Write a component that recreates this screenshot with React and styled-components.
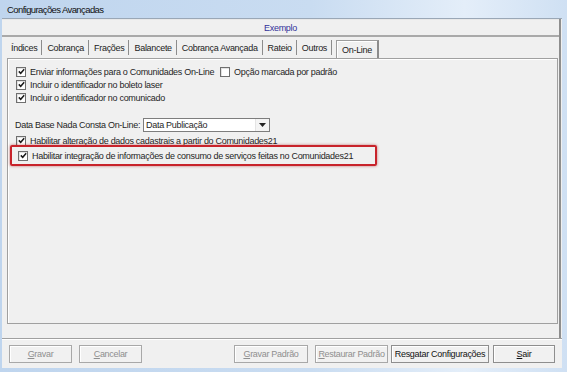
import React from 'react';
import styled, { createGlobalStyle } from 'styled-components';

const GlobalStyle = createGlobalStyle`
  html, body {
    margin: 0;
    padding: 0;
    background: #f0f0f0;
  }
  body {
    font-family: "Liberation Sans", Arial, sans-serif;
    font-size: 9px;
    letter-spacing: -0.3px;
    color: #1e1e1e;
  }
`;

const Frame = styled.div`
  width: 567px;
  height: 372px;
  box-sizing: border-box;
  display: flex;
  flex-direction: column;
  background: linear-gradient(90deg, #bfd5ee 0%, #c9dcf1 55%, #e4eef9 82%, #cfe0f3 100%);
  padding: 0 5px 4px 2px;
  overflow: hidden;
`;

const TitleBar = styled.div`
  height: 18px;
  display: flex;
  align-items: center;
  padding-left: 5px;
  font-size: 9.5px;
  letter-spacing: -0.6px;
  color: #111;
`;

const Client = styled.div`
  flex: 1;
  display: flex;
  flex-direction: column;
  background: #f0f0f0;
  border-top: 1px solid #9aa7b6;
`;

const Group = styled.div`
  flex: 1;
  display: flex;
  flex-direction: column;
  border-right: 2px solid #8e8e8e;
  margin-right: 1px;
`;

const Header = styled.div`
  height: 15px;
  display: flex;
  align-items: center;
  justify-content: center;
  border-top: 1px solid #e8e8e8;
  border-bottom: 2px solid #a9a9a9;
  color: #33339a;
`;

const TabRow = styled.div`
  display: flex;
  align-items: flex-end;
  height: 21px;
  padding-left: 5px;
`;

const Tab = styled.div`
  height: 15px;
  display: flex;
  align-items: center;
  padding: 0 4px 0 4px;
  margin-right: 0;
  color: #222;
  border-right: 1px solid #8c8c8c;
  margin-bottom: 3px;
  & + & {
    padding-left: 5px;
  }
`;

const ActiveTab = styled(Tab)`
  height: 17px;
  margin-bottom: 0;
  margin-left: 4px;
  border: 1px solid #9d9d9d;
  border-bottom: none;
  border-right: 2px solid #8c8c8c;
  padding: 0 5px;
  box-shadow: inset 1px 1px 0 #fff;
`;

const Panel = styled.div`
  margin: 0 1px 0 5px;
  height: 258px;
  border: 1px solid #a0a0a0;
  box-shadow: inset 1px 1px 0 #fff;
  padding: 6px 0 0 8px;
  display: flex;
  flex-direction: column;
  gap: 2px;
  color: #1f1f1f;
`;

const Row = styled.div`
  display: flex;
  align-items: center;
  height: 11px;
  margin-top: ${p => p.$top || 0}px;
`;

const CheckItem = styled.label`
  display: flex;
  align-items: center;
  gap: 4px;
  margin-right: 6px;
  white-space: nowrap;
`;

const Box = styled.span`
  width: 10px;
  height: 10px;
  box-sizing: border-box;
  border: 1px solid #6f6f6f;
  background: #fff;
  display: flex;
  align-items: center;
  justify-content: center;
  box-shadow: inset 1px 1px 0 #e2e2e2;
`;

const Highlight = styled.div`
  align-self: flex-start;
  margin: -3px 0 0 -6px;
  padding: 3px 16px 3px 6px;
  border: 2px solid #c8232b;
  border-radius: 2px;
  box-shadow: 0 0 3px rgba(160, 0, 0, 0.55);
`;

const FieldRow = styled.div`
  display: flex;
  align-items: center;
  height: 15px;
  margin-top: ${p => p.$top || 0}px;
  margin-left: -1px;
  gap: 3px;
  white-space: nowrap;
`;

const Select = styled.div`
  width: 127px;
  height: 14px;
  box-sizing: border-box;
  border: 1px solid #7d7d7d;
  background: #fff;
  display: flex;
  align-items: center;
  justify-content: space-between;
  padding-left: 2px;
`;

const Arrow = styled.span`
  width: 13px;
  height: 12px;
  display: flex;
  align-items: center;
  justify-content: center;
  background: #f4f4f4;
  border-left: 1px solid #e4e4e4;
`;

const Separator = styled.div`
  margin-top: auto;
  margin-right: -3px;
  border-top: 1px solid #a0a0a0;
  border-bottom: 1px solid #fff;
`;

const Footer = styled.div`
  display: flex;
  align-items: center;
  height: 28px;
  padding: 0 7px 0 7px;
  gap: 7px;
`;

const Button = styled.div`
  width: ${p => p.$w}px;
  height: 18px;
  box-sizing: border-box;
  border: 1px solid ${p => (p.$disabled ? '#a8a8a8' : '#8e8e8e')};
  background: #f1f1f1;
  display: flex;
  align-items: center;
  justify-content: center;
  white-space: nowrap;
  color: ${p => (p.$disabled ? '#8f8f8f' : '#111')};
  margin-left: ${p => p.$left || 0}px;
  box-shadow: inset 1px 1px 0 #fff;
`;

const Spacer = styled.div`
  flex: 1;
`;

const Check = ({ checked }) => (
  <Box>
    {checked && (
      <svg width="7" height="7" viewBox="0 0 7 7">
        <path d="M0.8 3.4 L2.7 5.3 L6.2 1.3" fill="none" stroke="#1a1a1a" strokeWidth="1.5" />
      </svg>
    )}
  </Box>
);

const Option = ({ checked, children }) => (
  <CheckItem>
    <Check checked={checked} />
    <span>{children}</span>
  </CheckItem>
);

const Key = ({ children }) => <u>{children}</u>;

const tabs = ['Índices', 'Cobrança', 'Frações', 'Balancete', 'Cobrança Avançada', 'Rateio', 'Outros'];

const App = () => (
  <>
    <GlobalStyle />
    <Frame>
      <TitleBar>Configurações Avançadas</TitleBar>
      <Client>
        <Group>
          <Header>Exemplo</Header>
          <TabRow>
            {tabs.map(t => (
              <Tab key={t}>{t}</Tab>
            ))}
            <ActiveTab>On-Line</ActiveTab>
          </TabRow>
          <Panel>
            <Row $top={1}>
              <Option checked>Enviar informações para o Comunidades On-Line</Option>
              <Option>Opção marcada por padrão</Option>
            </Row>
            <Row>
              <Option checked>Incluir o identificador no boleto laser</Option>
            </Row>
            <Row>
              <Option checked>Incluir o identificador no comunicado</Option>
            </Row>
            <FieldRow $top={12}>
              <span>Data Base Nada Consta On-Line:</span>
              <Select>
                <span>Data Publicação</span>
                <Arrow>
                  <svg width="7" height="4" viewBox="0 0 7 4">
                    <path d="M0 0 H7 L3.5 4 Z" fill="#222" />
                  </svg>
                </Arrow>
              </Select>
            </FieldRow>
            <Row $top={1}>
              <Option checked>Habilitar alteração de dados cadastrais a partir do Comunidades21</Option>
            </Row>
            <Highlight>
              <Row>
                <Option checked>
                  Habilitar integração de informações de consumo de serviços feitas no Comunidades21
                </Option>
              </Row>
            </Highlight>
          </Panel>
          <Separator />
        </Group>
        <Footer>
          <Button $w={63} $disabled><span><Key>G</Key>ravar</span></Button>
          <Button $w={63} $disabled><span><Key>C</Key>ancelar</span></Button>
          <Spacer />
          <Button $w={74} $disabled><span><Key>G</Key>ravar Padrão</span></Button>
          <Button $w={73} $disabled><span><Key>R</Key>estaurar Padrão</span></Button>
          <Button $w={98} $left={-4}>Resgatar Configurações</Button>
          <Button $w={62} $left={-3}><span><Key>S</Key>air</span></Button>
        </Footer>
      </Client>
    </Frame>
  </>
);

export default App;
